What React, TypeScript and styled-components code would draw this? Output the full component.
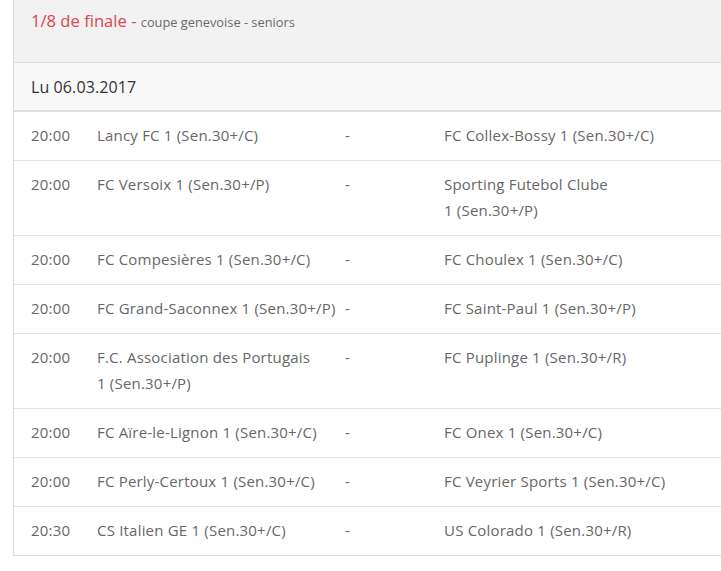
import React from 'react';
import styled, { createGlobalStyle } from 'styled-components';

const GlobalStyle = createGlobalStyle`
  body {
    margin: 0;
    background: #ffffff;
    font-family: 'Open Sans', 'Noto Sans', sans-serif;
    overflow: hidden;
  }
`;

interface Match {
  time: string;
  home: string;
  away: string;
}

// nbsp entre "1" et "(Sen..." pour garder le bloc ensemble
const nb = '\u00a0';

const matches: Match[] = [
  { time: '20:00', home: `Lancy FC 1${nb}(Sen.30+/C)`, away: `FC Collex-Bossy 1${nb}(Sen.30+/C)` },
  { time: '20:00', home: `FC Versoix 1${nb}(Sen.30+/P)`, away: `Sporting Futebol Clube 1${nb}(Sen.30+/P)` },
  { time: '20:00', home: `FC Compesières 1${nb}(Sen.30+/C)`, away: `FC Choulex 1${nb}(Sen.30+/C)` },
  { time: '20:00', home: `FC Grand-Saconnex 1${nb}(Sen.30+/P)`, away: `FC Saint-Paul 1${nb}(Sen.30+/P)` },
  { time: '20:00', home: `F.C. Association des Portugais 1${nb}(Sen.30+/P)`, away: `FC Puplinge 1${nb}(Sen.30+/R)` },
  { time: '20:00', home: `FC Aïre-le-Lignon 1${nb}(Sen.30+/C)`, away: `FC Onex 1${nb}(Sen.30+/C)` },
  { time: '20:00', home: `FC Perly-Certoux 1${nb}(Sen.30+/C)`, away: `FC Veyrier Sports 1${nb}(Sen.30+/C)` },
  { time: '20:30', home: `CS Italien GE 1${nb}(Sen.30+/C)`, away: `US Colorado 1${nb}(Sen.30+/R)` },
];

const App = () => {
  return (
    <>
      <GlobalStyle />
      <Panel>
        <PanelHeader>
          <RoundTitle>1/8 de finale - </RoundTitle>
          <Competition>coupe genevoise - seniors</Competition>
        </PanelHeader>

        <DateRow>Lu 06.03.2017</DateRow>

        {matches.map((m, i) => (
          <MatchRow key={i} $last={i === matches.length - 1}>
            <TimeCell>{m.time}</TimeCell>
            <TeamCell>{m.home}</TeamCell>
            <DashCell>-</DashCell>
            <TeamCell>{m.away}</TeamCell>
            <div />
          </MatchRow>
        ))}
      </Panel>
    </>
  );
};

const Panel = styled.section`
  margin-left: 13px;
  width: 708px;
  border-left: 1px solid #dcdcdc;
  border-bottom: 1px solid #dcdcdc;
  background-color: #ffffff;
`;

const PanelHeader = styled.header`
  box-sizing: border-box;
  height: 63px;
  padding: 9px 17px 0;
  background-color: #f2f2f2;
  border-bottom: 1px solid #dcdcdc;
  line-height: 24px;
`;

const RoundTitle = styled.span`
  font-size: 16.6px;
  color: #d9474d;
`;

const Competition = styled.span`
  font-size: 12.8px;
  color: #6a6a6a;
`;

const DateRow = styled.div`
  height: 46px;
  line-height: 46px;
  padding: 1px 17px 0;
  background-color: #f8f8f8;
  border-bottom: 2px solid #dedede;
  font-size: 16px;
  letter-spacing: 0.1px;
  color: #333333;
`;

const MatchRow = styled.div<{ $last?: boolean }>`
  display: grid;
  grid-template-columns: 83px 248px 99px 252px 1fr;
  padding: 10px 0 12px;
  border-bottom: ${props => (props.$last ? 'none' : '1px solid #e3e3e3')};
  font-size: 15px;
  letter-spacing: 0.2px;
  line-height: 26px;
  color: #676767;
`;

const TimeCell = styled.div`
  padding-left: 17px;
`;

const TeamCell = styled.div`
  padding-right: 3px;
`;

const DashCell = styled.div``;

export default App;
